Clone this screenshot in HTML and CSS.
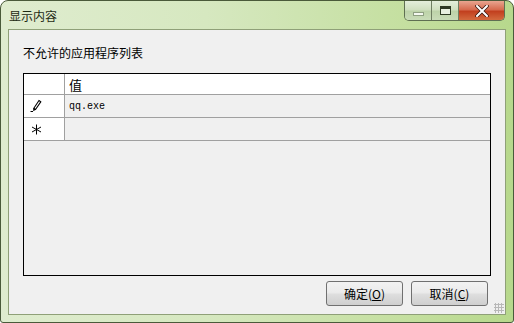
FILE: index.html
```html
<!DOCTYPE html>
<html lang="zh-CN">

<head>
  <meta charset="UTF-8" />
  <title>显示内容</title>
  <link rel="stylesheet" href="styles.css">
</head>

<body>
  <div class="window">
    <div class="titlebar">
      <span class="title">显示内容</span>
      <div class="caption-buttons">
        <div class="cap-btn cap-min"><span class="min-bar"></span></div>
        <div class="cap-btn cap-max"><span class="max-box"></span></div>
        <div class="cap-btn cap-close">
          <svg width="14" height="12" viewBox="0 0 14 12">
            <path d="M2 1 L12 11 M12 1 L2 11" stroke="#3a1a10" stroke-width="3.6" stroke-linecap="round" />
            <path d="M2 1 L12 11 M12 1 L2 11" stroke="#ffffff" stroke-width="2" stroke-linecap="round" />
          </svg>
        </div>
      </div>
    </div>

    <div class="client">
      <div class="label">不允许的应用程序列表</div>

      <div class="grid">
        <div class="grid-row grid-head">
          <div class="row-head"></div>
          <div class="cell">值</div>
        </div>
        <div class="grid-row">
          <div class="row-head">
            <svg width="14" height="14" viewBox="0 0 14 14">
              <path d="M10 1.5 L11.8 2.8 L6.5 10.5 L4.8 9.3 Z" fill="none" stroke="#000" stroke-width="1.1" />
              <path d="M4.8 9.3 L4.5 11.6 L6.5 10.5" fill="#000" stroke="#000" stroke-width="0.8" />
              <path d="M1.5 12.5 L4 12.5" stroke="#000" stroke-width="1" />
            </svg>
          </div>
          <div class="cell cell-value">qq.exe</div>
        </div>
        <div class="grid-row">
          <div class="row-head row-new">
            <svg width="11" height="11" viewBox="0 0 11 11">
              <path d="M5.5 0.5 L5.5 10.5 M1 3 L10 8 M10 3 L1 8" stroke="#000" stroke-width="1" />
            </svg>
          </div>
          <div class="cell"></div>
        </div>
      </div>

      <div class="actions">
        <button class="btn">确定(<u>O</u>)</button>
        <button class="btn">取消(<u>C</u>)</button>
      </div>
      <div class="grip"></div>
    </div>
  </div>
</body>

</html>
```

FILE: styles.css
```css
* {
  box-sizing: border-box;
}

html,
body {
  margin: 0;
  padding: 0;
  background: #ffffff;
}

body {
  font-family: "Noto Sans CJK SC", "Noto Sans", sans-serif;
  font-size: 12px;
  color: #000;
}

.window {
  width: 514px;
  height: 323px;
  border: 1px solid #4a5a3a;
  border-radius: 8px 8px 3px 3px;
  background: linear-gradient(to right, #dfeccf 0%, #d6e8c0 40%, #c4df9f 80%, #b7d88c 100%);
  display: flex;
  flex-direction: column;
  overflow: hidden;
}

.titlebar {
  height: 29px;
  display: flex;
  align-items: flex-start;
  padding-left: 8px;
}

.title {
  margin-top: 6px;
  font-size: 12px;
  color: #1e2a14;
}

.caption-buttons {
  margin-left: auto;
  margin-right: 8px;
  display: flex;
  border: 1px solid #5f6f52;
  border-top: none;
  border-radius: 0 0 5px 5px;
  overflow: hidden;
  height: 20px;
}

.cap-btn {
  display: flex;
  align-items: center;
  justify-content: center;
  height: 19px;
  border-right: 1px solid #6f7f62;
}

.cap-min,
.cap-max {
  width: 27px;
  background: linear-gradient(to bottom, #e4eedb 0%, #d0e0c0 45%, #bdd3a9 55%, #c9dcb8 100%);
}

.min-bar {
  width: 11px;
  height: 4px;
  margin-top: 7px;
  background: #f4f8f0;
  border: 1px solid #8f9f82;
}

.max-box {
  width: 11px;
  height: 9px;
  border: 1px solid #2e3a24;
  background: #e8f0e0;
  box-shadow: inset 0 2px 0 #2e3a24, inset 0 0 0 3px #e8f0e0;
}

.cap-close {
  width: 45px;
  border-right: none;
  background: linear-gradient(to bottom, #e8a590 0%, #d66b4f 45%, #c2401f 55%, #d36a3e 100%);
}

.client {
  flex: 1;
  margin: 0 7px 7px 7px;
  background: #f0f0f0;
  border: 1px solid #8fa078;
  display: flex;
  flex-direction: column;
  padding: 15px 14px 8px 14px;
  position: relative;
}

.label {
  height: 20px;
  line-height: 16px;
  color: #000;
}

.grid {
  margin-top: 8px;
  height: 203px;
  border: 1px solid #000;
  background: #f0f0f0;
}

.grid-row {
  display: flex;
  height: 23px;
  border-bottom: 1px solid #a0a0a0;
  background: #f0f0f0;
}

.grid-head {
  height: 21px;
  background: #ffffff;
  border-bottom: 1px solid #a0a0a0;
}

.row-head {
  width: 41px;
  border-right: 1px solid #a0a0a0;
  background: #ffffff;
  display: flex;
  align-items: center;
  padding-left: 5px;
}

.row-new {
  padding-left: 7px;
}

.cell {
  flex: 1;
  padding-left: 4px;
  display: flex;
  align-items: center;
}

.grid-head .cell {
  font-size: 13px;
}

.cell-value {
  font-family: "Liberation Mono", monospace;
  font-size: 10px;
}

.actions {
  margin-top: 5px;
  display: flex;
  justify-content: flex-end;
  gap: 8px;
  padding-right: 3px;
}

.btn {
  width: 77px;
  height: 25px;
  border: 1px solid #707070;
  border-radius: 3px;
  background: linear-gradient(to bottom, #f2f2f2 0%, #ebebeb 45%, #dddddd 55%, #cfcfcf 100%);
  font-family: "Noto Sans CJK SC", "Noto Sans", sans-serif;
  font-size: 12px;
  color: #000;
  padding: 0;
}

.grip {
  position: absolute;
  right: 1px;
  bottom: 1px;
  width: 10px;
  height: 10px;
  background-image: radial-gradient(circle, #b8b8b8 1px, transparent 1.2px);
  background-size: 3px 3px;
}
```
